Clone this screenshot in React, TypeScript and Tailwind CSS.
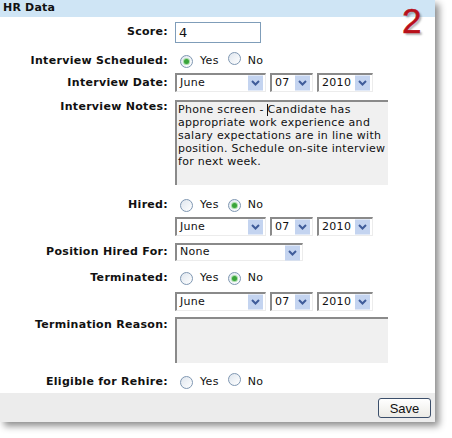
import React from "react";

const font = { fontFamily: '"DejaVu Sans", Verdana, sans-serif' };

function Radio({ checked }: { checked?: boolean }) {
  return (
    <span className="inline-flex h-[13px] w-[13px] items-center justify-center rounded-full border border-[#7f97b2] bg-gradient-to-br from-[#dfe6ee] to-white">
      {checked && <span className="h-[5px] w-[5px] rounded-full bg-[#3aa43a] shadow-[0_0_0_1px_#a6dca6]" />}
    </span>
  );
}

function YesNo({ value }: { value: "yes" | "no" | "none" }) {
  return (
    <div className="flex h-[16px] items-center pl-[5px] text-[11px] tracking-[0.3px] text-[#111]">
      <Radio checked={value === "yes"} />
      <span className="ml-[7px]">Yes</span>
      <span className="ml-[9px]"><Radio checked={value === "no"} /></span>
      <span className="ml-[7px]">No</span>
    </div>
  );
}

function Arrow() {
  return (
    <span className="absolute right-[2px] top-1/2 flex h-[15px] w-[15px] -translate-y-1/2 items-center justify-center bg-[#c4d4f0]">
      <svg width="9" height="7" viewBox="0 0 9 7">
        <path d="M1 1.5 L4.5 5 L8 1.5" fill="none" stroke="#3f5c9a" strokeWidth="2" />
      </svg>
    </span>
  );
}

function Select({ value, w, h = 19 }: { value: string; w: string; h?: number }) {
  return (
    <div
      className={`relative flex items-center border-t-2 border-l-2 border-r border-b border-t-[#8a8a8a] border-l-[#8a8a8a] border-r-[#ececec] border-b-[#ececec] bg-white pl-[3px] text-[11px] tracking-[0.3px] text-[#111] ${w}`}
      style={{ height: h }}
    >
      {value}
      <Arrow />
    </div>
  );
}

function DateRow() {
  return (
    <div className="flex gap-[4px]">
      <Select value="June" w="w-[91px]" />
      <Select value="07" w="w-[43px]" />
      <Select value="2010" w="w-[56px]" />
    </div>
  );
}

const labelCls = "w-[168px] shrink-0 text-right text-[11px] font-bold tracking-[0.3px] text-[#111]";

function Row({ label, children, mt, h }: { label: string; children: React.ReactNode; mt: string; h?: string }) {
  return (
    <div className={`flex items-center ${mt} ${h ?? ""}`}>
      <div className={labelCls}>{label}</div>
      <div className="ml-[7px]">{children}</div>
    </div>
  );
}

export default function App() {
  return (
    <div className="h-[438px] w-[452px] bg-white" style={font}>
      <div className="relative w-[435px] bg-white shadow-[4px_4px_7px_rgba(0,0,0,0.45)]">
        <div className="flex h-[17px] items-center bg-[#cfe5f5] pl-[3px] text-[11px] font-bold tracking-[0.2px] text-[#111]">HR Data</div>
        <div
          className="absolute left-[402px] top-[3px] text-[35px] leading-none text-[#b8101a]"
          style={{ fontFamily: '"Liberation Sans", Arial, sans-serif', textShadow: "2px 2px 2px rgba(0,0,0,0.3)", WebkitTextStroke: "0.6px #b8101a" }}
        >
          2
        </div>

        <Row label="Score:" mt="mt-[5px]" h="h-[21px]">
          <div className="flex h-[21px] w-[86px] items-center border border-[#7f9db9] bg-white pl-[3px] text-[13px] text-[#111]">4</div>
        </Row>
        <Row label="Interview Scheduled:" mt="mt-[10px]" h="h-[16px]">
          <YesNo value="yes" />
        </Row>
        <div className="mt-[4px] flex">
          <div className={`${labelCls} leading-[19px]`}>Interview Date:</div>
          <div className="ml-[7px]"><DateRow /></div>
        </div>
        <div className="mt-[8px] flex">
          <div className={`${labelCls} leading-[13px]`}>Interview Notes:</div>
          <div className="relative ml-[7px] h-[85px] w-[213px] border-t-2 border-l-2 border-t-[#8a8a8a] border-l-[#8a8a8a] bg-[#f0f0f0] pl-[1px] pt-[1px] text-[11px] leading-[13px] tracking-[0.3px] text-[#111]">
            Phone screen - Candidate has appropriate work experience and salary expectations are in line with position. Schedule on-site interview for next week.
            <span className="absolute left-[90px] top-[2px] h-[12px] w-px bg-[#111]" />
          </div>
        </div>
        <Row label="Hired:" mt="mt-[12px]" h="h-[16px]">
          <YesNo value="no" />
        </Row>
        <div className="mt-[4px] ml-[175px]"><DateRow /></div>
        <div className="mt-[7px] flex items-center">
          <div className={labelCls}>Position Hired For:</div>
          <div className="ml-[7px]"><Select value="None" w="w-[128px]" h={18} /></div>
        </div>
        <Row label="Terminated:" mt="mt-[9px]" h="h-[16px]">
          <YesNo value="no" />
        </Row>
        <div className="mt-[6px] ml-[175px]"><DateRow /></div>
        <div className="mt-[6px] flex">
          <div className={`${labelCls} pt-[1px] leading-[13px]`}>Termination Reason:</div>
          <div className="ml-[7px] h-[46px] w-[213px] border-t-2 border-l-2 border-t-[#8a8a8a] border-l-[#8a8a8a] bg-[#f0f0f0]" />
        </div>
        <Row label="Eligible for Rehire:" mt="mt-[11px]" h="h-[16px]">
          <YesNo value="none" />
        </Row>
        <div className="mt-[3px] flex h-[29px] items-center justify-end bg-[#ececec] pr-[4px]">
          <button
            className="h-[20px] w-[53px] rounded-[3px] border border-[#3c4f6b] bg-gradient-to-b from-white to-[#ecebe6] text-[13px] text-[#111]"
            style={{ fontFamily: '"Liberation Sans", Arial, sans-serif' }}
          >
            Save
          </button>
        </div>
      </div>
    </div>
  );
}
